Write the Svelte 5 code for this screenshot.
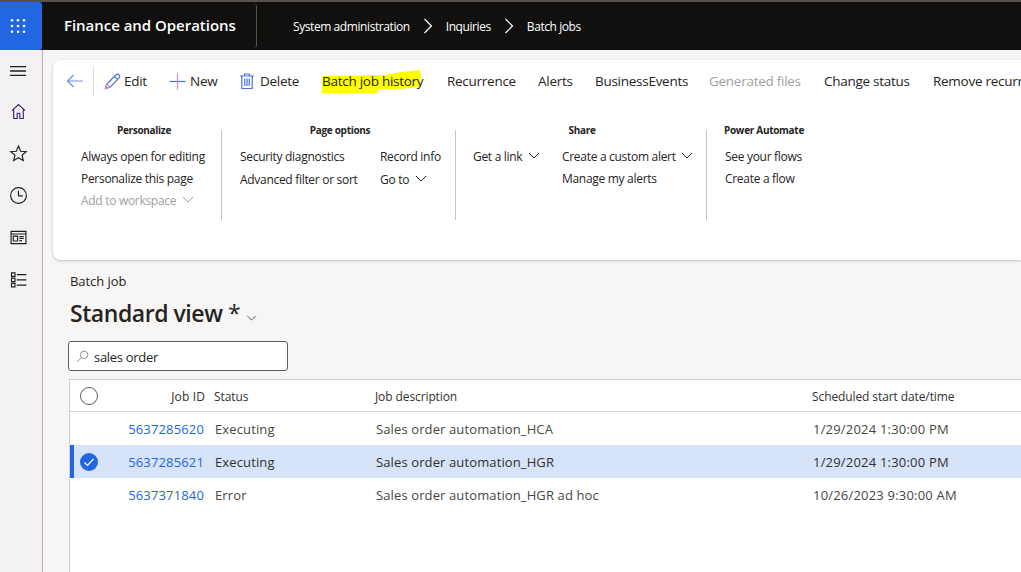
<script>
  const rail = [
    'M4.5 11 L12 4 L19.5 11 M6.5 9.5 V20 H10.5 V14 H13.5 V20 H17.5 V9.5',
    'M12 3.5 L14.5 9.5 L20.8 10 L16 14 L17.5 20.2 L12 16.9 L6.5 20.2 L8 14 L3.2 10 L9.5 9.5 Z',
    '',
    'M3.5 5 H20.5 V19 H3.5 Z M3.5 8 H20.5 M6 10.5 H11 V16 H6 Z M13 11 H18 M13 13.2 H18 M13 15.5 H16',
    'M4 4.5 H8 V8.5 H4 Z M4 10.5 H8 V14.5 H4 Z M4 16.5 H8 V20.5 H4 Z M10 6.5 H21 M10 12.5 H21 M10 18.5 H21'
  ];
  const rows = [
    { id: '5637285620', status: 'Executing', desc: 'Sales order automation_HCA', date: '1/29/2024 1:30:00 PM' },
    { id: '5637285621', status: 'Executing', desc: 'Sales order automation_HGR', date: '1/29/2024 1:30:00 PM', selected: true },
    { id: '5637371840', status: 'Error', desc: 'Sales order automation_HGR ad hoc', date: '10/26/2023 9:30:00 AM' }
  ];
</script>

{#snippet chevron()}
  <svg class="chev" viewBox="0 0 12 7" aria-hidden="true"><path d="M1 1 L6 6 L11 1" /></svg>
{/snippet}

<div class="page">
  <header class="top">
    <div class="waffle">
      <svg viewBox="0 0 16 14" width="16" height="14" aria-hidden="true">
        {#each [1.3, 7, 12.7] as y}
          {#each [2, 8, 14] as x}
            <circle cx={x} cy={y} r="1.3" fill="#fff" />
          {/each}
        {/each}
      </svg>
    </div>
    <div class="brand">Finance and Operations</div>
    <nav class="crumbs">
      <span>System administration</span>
      <svg class="sep" viewBox="0 0 10 16" aria-hidden="true"><path d="M1.5 1 L8.5 8 L1.5 15" /></svg>
      <span>Inquiries</span>
      <svg class="sep" viewBox="0 0 10 16" aria-hidden="true"><path d="M1.5 1 L8.5 8 L1.5 15" /></svg>
      <span>Batch jobs</span>
    </nav>
  </header>

  <div class="body">
    <aside class="rail">
      <button class="rail-btn menu" aria-label="Menu">
        <svg viewBox="0 0 16 10" width="16" height="10"><path d="M0 .5 H16 M0 5 H16 M0 9.5 H16" /></svg>
      </button>
      {#each rail as d, i}
        <button class="rail-btn" aria-label="Navigation {i}">
          <svg viewBox="0 0 24 24" width="21" height="21">
            {#if i === 2}
              <circle cx="12" cy="12" r="9" /><path d="M12 6.5 V12.5 H17" />
            {:else}
              <path {d} />
            {/if}
          </svg>
        </button>
      {/each}
    </aside>

    <main class="main">
      <section class="card">
        <div class="cmds">
          <svg class="back" viewBox="0 0 18 14" aria-hidden="true"><path d="M17 7 H1.5 M7.5 1 L1.5 7 L7.5 13" /></svg>
          <span class="vr"></span>
          <div class="cmd edit">
            <svg viewBox="0 0 17 17" width="17" height="17" aria-hidden="true"><path class="blue" d="M1.5 15.5 L2.8 11 L11.8 2 C12.8 1 14 1 15 2 C16 3 16 4.2 15 5.2 L6 14.2 Z M10.5 3.3 L13.7 6.5" /><path class="pink" d="M2.8 11 L6 14.2 L1.5 15.5 Z" /></svg>
            <span>Edit</span>
          </div>
          <div class="cmd new">
            <svg viewBox="0 0 17 17" width="17" height="17" aria-hidden="true"><path class="blue" d="M.5 8.5 H16.5" /><path class="pink" d="M8.5 .5 V16.5" /></svg>
            <span>New</span>
          </div>
          <div class="cmd del">
            <svg viewBox="0 0 14 16" width="14" height="16" aria-hidden="true"><path class="blue" d="M0 3 H14 M4.5 3 V1 H9.5 V3 M1.8 3 V15.5 H12.2 V3 M4.8 5.5 V13 M7 5.5 V13 M9.2 5.5 V13" /></svg>
            <span>Delete</span>
          </div>
          <div class="cmd hist">
            <svg class="marker" viewBox="0 0 104 25" aria-hidden="true"><path d="M1 7 L64 6 L80 3 L99 1 L100 9 L99 18 L80 20 L57 21 L57 24 L1 24 Z" /></svg>
            <span>Batch job history</span>
          </div>
          <div class="cmd rec">Recurrence</div>
          <div class="cmd alerts">Alerts</div>
          <div class="cmd bus">BusinessEvents</div>
          <div class="cmd gen">Generated files</div>
          <div class="cmd chg">Change status</div>
          <div class="cmd rem">Remove recurrence</div>
        </div>

        <div class="groups">
          <div class="group g1">
            <h3>Personalize</h3>
            <ul>
              <li>Always open for editing</li>
              <li>Personalize this page</li>
              <li class="off">Add to workspace {@render chevron()}</li>
            </ul>
          </div>
          <div class="group g2">
            <h3>Page options</h3>
            <div class="cols">
              <ul class="c1"><li>Security diagnostics</li><li>Advanced filter or sort</li></ul>
              <ul><li>Record info</li><li>Go to {@render chevron()}</li></ul>
            </div>
          </div>
          <div class="group g3">
            <h3>Share</h3>
            <div class="cols">
              <ul class="c1"><li>Get a link {@render chevron()}</li></ul>
              <ul><li>Create a custom alert {@render chevron()}</li><li>Manage my alerts</li></ul>
            </div>
          </div>
          <div class="group g4">
            <h3>Power Automate</h3>
            <ul><li>See your flows</li><li>Create a flow</li></ul>
          </div>
        </div>
      </section>

      <div class="caption">Batch job</div>
      <h1 class="view">Standard view <span class="star">*</span> {@render chevron()}</h1>
      <div class="search">
        <svg viewBox="0 0 14 14" width="13" height="13" aria-hidden="true"><circle cx="8.8" cy="5.2" r="4" /><path d="M5.8 8 L1 13" /></svg>
        <span>sales order</span>
      </div>

      <section class="grid">
        <div class="row head">
          <span class="sel"><span class="radio"></span></span>
          <span class="jid">Job ID</span>
          <span class="st">Status</span>
          <span class="ds">Job description</span>
          <span class="dt">Scheduled start date/time</span>
        </div>
        {#each rows as r}
          <div class="row item" class:selected={r.selected}>
            <span class="sel">
              {#if r.selected}
                <svg viewBox="0 0 18 18" width="18" height="18" aria-hidden="true"><circle cx="9" cy="9" r="9" fill="#2266e3" /><path d="M4.5 9.5 L7.5 12.5 L13.5 6" fill="none" stroke="#fff" stroke-width="1.2" /></svg>
              {/if}
            </span>
            <span class="jid link">{r.id}</span>
            <span class="st">{r.status}</span>
            <span class="ds">{r.desc}</span>
            <span class="dt">{r.date}</span>
          </div>
        {/each}
      </section>
    </main>
  </div>
</div>

<style>
  :global(body) { margin: 0; overflow: hidden; }
  .page {
    width: 1021px; height: 572px; overflow: hidden; display: flex; flex-direction: column;
    font-family: "Open Sans", "Noto Sans", sans-serif; font-size: 13px; letter-spacing: -0.3px; color: #252423;
    background: #f8f6f4;
  }
  .top { height: 48px; flex: none; border-top: 2px solid #55524f; background: #11100f; display: flex; align-items: center; color: #fff; }
  .waffle { width: 42px; height: 48px; box-sizing: border-box; padding-right: 6px; background: #2266e3; border-radius: 0 3px 3px 0; display: flex; align-items: center; justify-content: center; }
  .brand { width: 215px; height: 44px; box-sizing: border-box; padding-left: 22px; line-height: 42px; font-size: 15px; font-weight: 600; letter-spacing: -0.03px; border-right: 1px solid #55524f; border-radius: 0 3px 3px 0; }
  .crumbs { display: flex; align-items: center; padding-left: 36px; font-size: 12px; letter-spacing: -0.42px; }
  .sep { width: 10px; height: 16px; margin: 0 13px; }
  .sep path { fill: none; stroke: #fff; stroke-width: 1.2; }

  .body { flex: 1; display: flex; min-height: 0; }
  .rail { width: 36px; flex: none; background: #f3f2f1; border-right: 1px solid #b3b0ad; display: flex; flex-direction: column; align-items: center; padding: 14px 6px 0 0; }
  .rail-btn { padding: 0; border: 0; background: none; width: 24px; height: 42px; flex: none; display: flex; align-items: center; justify-content: center; }
  .rail-btn.menu { height: 14px; margin-bottom: 12px; }
  .rail-btn svg { fill: none; stroke: #201f1e; stroke-width: 1.3; }
  .rail-btn:nth-child(2) svg { stroke: #3b1f6b; }
  .main { flex: 1; min-width: 0; padding: 10px 0 0 10px; display: flex; flex-direction: column; }

  .card { height: 200px; flex: none; box-sizing: border-box; background: #fff; border-radius: 8px 0 0 8px; box-shadow: 0 1px 3px rgba(0,0,0,.22); }
  .cmds { height: 42px; display: flex; align-items: center; white-space: nowrap; font-size: 13.5px; overflow: hidden; padding-left: 13px; }
  .back { width: 18px; height: 14px; flex: none; }
  .back path { fill: none; stroke: #6f8fe8; stroke-width: 1.2; }
  .vr { width: 1px; height: 30px; background: #e1dfdd; flex: none; margin: 0 10px 0 9px; }
  .cmd { display: flex; align-items: center; flex: none; position: relative; letter-spacing: -0.27px; }
  .cmd svg path { fill: none; stroke-width: 1.2; }
  .cmd .blue { stroke: #4a6fe0; }
  .cmd .pink { stroke: #c78ad8; }
  .cmd span { position: relative; }
  .edit { width: 65px; gap: 3px; }
  .new { width: 71px; gap: 4px; }
  .del { width: 82px; gap: 6px; }
  .hist { width: 125px; }
  .rec { width: 91px; }
  .alerts { width: 57px; }
  .bus { width: 114px; }
  .gen { width: 115px; color: #a19f9d; }
  .chg { width: 109px; }
  .marker { position: absolute; left: -1px; top: -3px; width: 104px; height: 25px; }
  .cmd .marker path { fill: #ffff00; stroke: none; }

  .groups { display: flex; padding-top: 28px; font-size: 12px; letter-spacing: -0.3px; }
  .group { height: 90px; box-sizing: border-box; flex: none; }
  .group h3 { margin: -8px 0 0; font-size: 10px; font-weight: 700; line-height: 16px; text-align: center; letter-spacing: -0.3px; color: #252423; }
  .group ul { list-style: none; margin: 8px 0 0; padding: 0; }
  .group li { height: 22px; line-height: 22px; white-space: nowrap; }
  .group li.off { color: #a19f9d; }
  .cols { display: flex; }
  .g1 { width: 169px; border-right: 1px solid #c8c6c4; padding-left: 28px; }
  .g1 h3 { width: 126px; }
  .g2 { width: 234px; border-right: 1px solid #c8c6c4; padding-left: 18px; }
  .g2 h3 { width: 200px; }
  .g2 li + li { margin-top: 1px; }
  .g3 { width: 251px; border-right: 1px solid #c8c6c4; padding-left: 17px; }
  .g3 h3 { width: 218px; }
  .g4 { padding-left: 17px; }
  .g4 h3 { text-align: left; }
  .g4 li { padding-left: 1px; }
  .g2 .c1 { width: 140px; }
  .g3 .c1 { width: 89px; }
  .chev { width: 12px; height: 7px; margin-left: 3px; vertical-align: 2px; }
  .chev path { fill: none; stroke: currentColor; stroke-width: 1; }

  .caption { margin: 13px 0 0 17px; height: 16px; line-height: 16px; font-size: 13px; letter-spacing: -0.05px; }
  .view { margin: 8px 0 0 17px; height: 32px; line-height: 32px; font-size: 23px; font-weight: 600; color: #252423; letter-spacing: -0.45px; }
  .star { font-weight: 400; }
  .view .chev { width: 11px; height: 6px; vertical-align: 1px; color: #484644; margin-left: 0; }
  .search { margin: 12px 0 0 15px; width: 220px; height: 30px; box-sizing: border-box; border: 1px solid #605e5c; border-radius: 3px; background: #fff; display: flex; align-items: center; padding: 1px 0 0 7px; gap: 5px; font-size: 13px; }
  .search svg { fill: none; stroke: #8a8886; stroke-width: 1; }

  .grid { margin: 8px 0 0 16px; flex: 1; background: #fff; border-left: 1px solid #d2d0ce; border-top: 1px solid #d2d0ce; }
  .row { display: flex; align-items: center; white-space: nowrap; }
  .head { box-sizing: content-box; padding-top: 1px; height: 30px; border-bottom: 1px solid #d2d0ce; font-size: 12px; color: #323130; letter-spacing: -0.1px; }
  .head .jid { letter-spacing: 0.15px; }
  .item { height: 33px; font-size: 13px; color: #484644; letter-spacing: 0.12px; }
  .item .jid { box-sizing: border-box; padding-right: 1px; }
  .item .dt { padding-left: 1px; letter-spacing: 0.2px; }
  .sel { width: 37px; flex: none; display: flex; justify-content: center; }
  .radio { width: 16px; height: 16px; border: 1px solid #605e5c; border-radius: 50%; }
  .jid { width: 98px; flex: none; text-align: right; }
  .st { width: 170px; flex: none; padding-left: 10px; box-sizing: border-box; }
  .ds { width: 437px; flex: none; box-sizing: border-box; padding-left: 1px; }
  .head .st { padding-left: 9px; }
  .head .ds { padding-left: 0; }
  .link { color: #2266e3; letter-spacing: 0.15px; }
  .selected { background: #d6e3f9; box-shadow: inset 4px 0 0 #2266e3; color: #323130; }
</style>
